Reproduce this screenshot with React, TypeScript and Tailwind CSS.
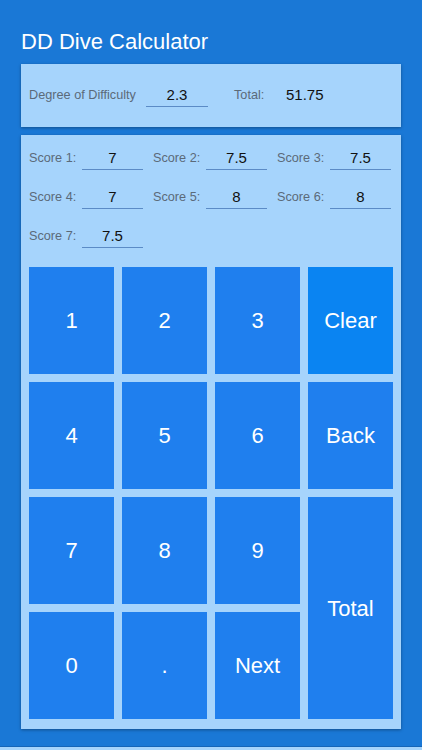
const scores = ['7', '7.5', '7.5', '7', '8', '8', '7.5'];

const keys: { label: string; className?: string }[] = [
  { label: '1' },
  { label: '2' },
  { label: '3' },
  { label: 'Clear', className: 'bg-[#0a84f2]' },
  { label: '4' },
  { label: '5' },
  { label: '6' },
  { label: 'Back' },
  { label: '7' },
  { label: '8' },
  { label: '9' },
  { label: 'Total', className: 'row-span-2' },
  { label: '0' },
  { label: '.' },
  { label: 'Next' },
];

function Field({ value, width }: { value: string; width: string }) {
  return (
    <div
      className={`${width} h-[23px] border-b border-[#5b8bc6] text-center text-[15px] leading-[22px] text-[#111]`}
    >
      {value}
    </div>
  );
}

export default function App() {
  return (
    <div
      className="flex h-[750px] w-[422px] flex-col overflow-hidden bg-[#1a78d6]"
      style={{ fontFamily: '"Liberation Sans", Arial, sans-serif' }}
    >
      <h1 className="mb-[9px] ml-[21px] pt-[29px] text-[22px] leading-[26px] text-white">DD Dive Calculator</h1>

      <div className="mx-[21px] flex h-[63px] items-center bg-[#a6d4fc] px-2 shadow-[0_1px_3px_rgba(0,0,0,0.35)]">
        <span className="w-[117px] text-[12.7px] text-[#5b6a79]">Degree of Difficulty</span>
        <Field value="2.3" width="w-[62px]" />
        <span className="ml-[26px] w-[52px] text-[12.7px] text-[#5b6a79]">Total:</span>
        <span className="text-[15px] text-[#111]">51.75</span>
      </div>

      <div className="mx-[21px] mt-2 bg-[#a6d4fc] px-2 pb-[10px] pt-3 shadow-[0_1px_3px_rgba(0,0,0,0.35)]">
        <div className="grid grid-cols-[repeat(3,124px)] gap-y-4">
          {scores.map((s, i) => (
            <div key={i} className="flex items-center">
              <span className="w-[53px] text-[12.7px] text-[#5b6a79]">Score {i + 1}:</span>
              <Field value={s} width="w-[61px]" />
            </div>
          ))}
        </div>

        <div className="mt-[19px] grid grid-cols-4 grid-rows-[repeat(4,107px)] gap-2">
          {keys.map((k) => (
            <button
              key={k.label}
              type="button"
              className={`flex items-center justify-center text-[22px] text-white ${k.className ?? ''} ${
                k.className?.includes('bg-') ? '' : 'bg-[#1f7fee]'
              }`}
            >
              {k.label}
            </button>
          ))}
        </div>
      </div>

      <div className="mt-auto h-[4px] border-t border-[#1565b8] bg-[#a6d4fc]" />
    </div>
  );
}
